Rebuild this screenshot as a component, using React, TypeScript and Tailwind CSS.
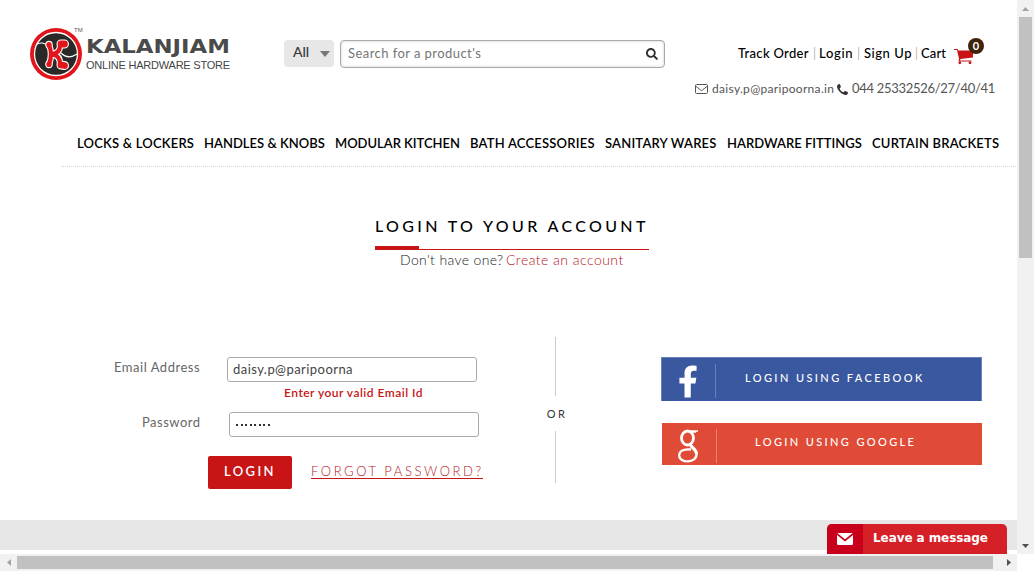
import type { ReactNode } from "react";
import { FaSearch, FaFacebookF } from "react-icons/fa";

function Emblem() {
  return (
    <svg viewBox="0 0 54 54" className="h-[54px] w-[54px] shrink-0">
      <circle cx="27" cy="27" r="26" fill="#e3151c" />
      <circle cx="27" cy="27" r="21.5" fill="#2a2928" stroke="#fff" strokeWidth="1.3" />
      <path d="M8 17 Q15 14 20 20 M32 26 Q39 33 48 27" fill="none" stroke="#fff" strokeWidth="1.2" />
      <g strokeLinecap="round" strokeLinejoin="round" fill="none" stroke="#fff">
        <path d="M20 18 Q24 27 20 37 M23 27 Q31 26 31 19 M25 28 Q31 29 31 37" strokeWidth="6.4" />
        <path d="M20 17.5 V18 M20 37 V37.5" strokeWidth="7.4" />
        <path d="M32 17 L35.5 17 M32 38 L35.5 38.5" strokeWidth="9" />
      </g>
      <g strokeLinecap="round" strokeLinejoin="round" fill="none" stroke="#e3151c">
        <path d="M20 18 Q24 27 20 37 M23 27 Q31 26 31 19 M25 28 Q31 29 31 37" strokeWidth="4.2" />
        <path d="M20 17.5 V18 M20 37 V37.5" strokeWidth="5.2" />
        <path d="M32 17 L35.5 17 M32 38 L35.5 38.5" strokeWidth="6.8" />
      </g>
    </svg>
  );
}

function Cart() {
  return (
    <svg viewBox="0 0 20 17" className="mt-[10px] h-[17px] w-5" fill="#c81414">
      <path d="M0 1 H3.6 L4.3 2.5 H19 V9.5 L6.5 11 L6 12.6 H17.5 V13.6 H4.6 L5 10.5 L3 2 H0 Z" />
      <circle cx="5.8" cy="14.8" r="1.4" />
      <circle cx="16" cy="14.8" r="1.4" />
    </svg>
  );
}

function Mail() {
  return (
    <svg viewBox="0 0 14 12" className="mr-[3px] h-3 w-[14px] shrink-0" fill="none" stroke="#555">
      <rect x="0.5" y="1.5" width="12" height="9" rx="1" />
      <path d="M0.8 3.2 L5.5 7 Q6.5 7.7 7.5 7 L12.2 3.2" />
    </svg>
  );
}

function Phone() {
  return (
    <svg viewBox="0 0 11 11" className="mr-[4px] h-[11px] w-[11px] shrink-0" fill="#333">
      <path d="M0 2.3 C0 1 1.3 0 2.6 0 C3 0 3.5 2 3.9 2.8 C4 3.6 2.6 4.1 2.7 4.7 C3.4 6.3 4.7 7.6 6.3 8.3 C6.9 8.4 7.4 7 8.2 7.1 C9 7.5 11 8 11 8.4 C11 9.7 10 11 8.7 11 C5 11 0 6 0 2.3 Z" />
    </svg>
  );
}

function GoogleG() {
  return (
    <svg viewBox="0 0 22 34" className="h-[34px] w-[22px]" fill="none" stroke="#fff">
      <ellipse cx="10.5" cy="9" rx="6" ry="7" strokeWidth="2.8" />
      <path d="M12 2 H21 M14.5 3 H19" strokeWidth="1.5" />
      <path d="M13 15 C13 18 19.5 19.5 19.5 25" strokeWidth="3.2" />
      <path d="M19.5 25 C20 34.5 2.2 34.5 2.2 26.5 C2.2 21 8 20 14 20.5" strokeWidth="2.3" />
    </svg>
  );
}

function NavItem({ className, children }: { className: string; children: ReactNode }) {
  return <a className={`shrink-0 ${className}`}>{children}</a>;
}

function Header() {
  return (
    <header className="flex h-[120px] w-[1017px]">
      <div className="flex w-[284px] pt-[27px] pl-[29px]">
        <Emblem />
        <div className="relative w-[160px] pl-[3px]">
          <span className="absolute top-[-1px] left-[-9px] font-['Liberation_Sans'] text-[6px] leading-[8px] text-[#555]">TM</span>
          <div className="mt-[8px] h-[23px] w-[121px] origin-left scale-x-[1.2] font-['DejaVu_Sans'] text-[19px] leading-[23px] font-bold text-[#4a4a4a]">KALANJIAM</div>
          <div className="font-['Liberation_Sans'] text-[11px] leading-[15px] tracking-[-0.22px] whitespace-nowrap text-[#444]">ONLINE HARDWARE STORE</div>
        </div>
      </div>
      <div className="flex w-[381px] gap-[6px] pt-[40px]">
        <button className="flex h-[27px] w-[50px] items-center justify-between rounded-[4px] bg-[#e7e7e7] pr-1 pb-[4px] pl-[9px] text-[14px] font-medium text-[#333]">
          All
          <svg viewBox="0 0 10 6" className="mt-[4px] h-[6px] w-[10px]"><path d="M0 0H10L5 6Z" fill="#777" /></svg>
        </button>
        <div className="flex h-[28px] w-[325px] items-center justify-between rounded-[4px] border border-[#aaa] pr-[6px] pb-px pl-[7px] text-[13px] tracking-[0.44px] text-[#757575] shadow-[inset_0_0_3px_#ccc]">
          Search for a product's
          <FaSearch className="h-[12px] w-[12px] text-[#333]" />
        </div>
      </div>
      <div className="w-[352px]">
        <div className="flex h-[74px] pt-[38px] pl-[73px] text-[13px] leading-[31px] font-medium whitespace-nowrap text-black">
          <span className="w-[75px] tracking-[0.3px]">Track Order</span>
          <span className="w-[6px] font-light text-[#777]">|</span>
          <span className="w-[38px] tracking-[0.7px]">Login</span>
          <span className="w-[7px] font-light text-[#777]">|</span>
          <span className="w-[51px] tracking-[0.55px]">Sign Up</span>
          <span className="w-[6px] font-light text-[#b66]">|</span>
          <span className="w-[33px] tracking-[0.12px]">Cart</span>
          <span className="relative">
            <Cart />
            <b className="absolute top-0 left-[14px] h-4 w-4 rounded-full bg-[#40230c] text-center text-[11px] leading-4 text-white">0</b>
          </span>
        </div>
        <div className="flex h-[30px] items-center pl-[30px] text-[12px] whitespace-nowrap text-[#555]">
          <Mail />
          <span className="w-[125px] tracking-[0.31px]">daisy.p@paripoorna.in</span>
          <Phone />
          <span className="text-[13px] tracking-[-0.29px]">044 25332526/27/40/41</span>
        </div>
      </div>
    </header>
  );
}

function Nav() {
  return (
    <nav className="ml-[61px] flex h-[47px] w-[955px] border-b border-dotted border-[#d4d4d4] pl-4 text-[13px] leading-[46px] font-semibold whitespace-nowrap text-black">
      <NavItem className="w-[127px] tracking-[0.2px]">LOCKS &amp; LOCKERS</NavItem>
      <NavItem className="w-[131px] tracking-[0.02px]">HANDLES &amp; KNOBS</NavItem>
      <NavItem className="w-[135px] tracking-[-0.02px]">MODULAR KITCHEN</NavItem>
      <NavItem className="w-[135px] tracking-[0.21px]">BATH ACCESSORIES</NavItem>
      <NavItem className="w-[122px] tracking-[0.2px]">SANITARY WARES</NavItem>
      <NavItem className="w-[145px] tracking-[0.02px]">HARDWARE FITTINGS</NavItem>
      <NavItem className="tracking-[0.2px]">CURTAIN BRACKETS</NavItem>
    </nav>
  );
}

function Title() {
  return (
    <section className="ml-[375px] h-[170px] w-[274px] pt-[48px] whitespace-nowrap">
      <h1 className="h-[31px] text-[16px] leading-[21px] font-medium tracking-[3.35px] text-black">LOGIN TO YOUR ACCOUNT</h1>
      <div className="flex h-[4px] items-end">
        <i className="h-[4px] w-[44px] bg-[#c81414]" />
        <i className="h-px w-[230px] bg-[#c81414]" />
      </div>
      <p className="flex pl-[25px] text-[14px] leading-[20px] font-light text-[#222]">
        <span className="w-[106px] tracking-[0.35px]">Don't have one?</span>
        <a className="tracking-[0.47px] text-[#b8141c]">Create an account</a>
      </p>
    </section>
  );
}

function LoginForm() {
  return (
    <form className="w-[545px] shrink-0 pt-[20px] text-[13px] whitespace-nowrap text-[#666]">
      <div className="flex h-[25px]">
        <label className="w-[227px] pl-[114px] leading-[21px] tracking-[0.52px]">Email Address</label>
        <div className="w-[250px] rounded-[3px] border border-[#aaa] pl-[5px] leading-[23px] tracking-[0.45px] text-[#444]">daisy.p@paripoorna</div>
      </div>
      <p className="h-[30px] pl-[284px] text-[12px] leading-[21px] font-semibold tracking-[0.48px] text-[#c81414]">Enter your valid Email Id</p>
      <div className="flex h-[25px]">
        <label className="w-[229px] pl-[142px] leading-[21px] tracking-[0.49px]">Password</label>
        <div className="flex w-[250px] items-center gap-[2.5px] rounded-[3px] border border-[#aaa] pl-[6px]">
          {Array.from({ length: 8 }, (_, i) => <i key={i} className="h-[2px] w-[2px] bg-[#333]" />)}
        </div>
      </div>
      <div className="mt-[19px] flex pl-[208px]">
        <button className="h-[33px] w-[84px] rounded-[2px] bg-[#c81414] pb-px text-[13px] font-semibold tracking-[2.4px] text-white">LOGIN</button>
        <a className="ml-[19px] h-[23px] w-[172px] border-b border-[#c81414] leading-[31px] font-light tracking-[2.57px] text-[#b8141c]">FORGOT PASSWORD?</a>
      </div>
    </form>
  );
}

function Divider() {
  return (
    <div className="flex w-[21px] shrink-0 flex-col items-center text-[11px] text-[#333]">
      <i className="h-[59px] w-px bg-[#ccc]" />
      <span className="h-[35px] pl-[3px] leading-[35px] tracking-[2.5px]">OR</span>
      <i className="h-[52px] w-px bg-[#ccc]" />
    </div>
  );
}

function Social() {
  return (
    <div className="ml-[95px] pt-[20px] text-[11px] font-medium whitespace-nowrap text-white">
      <a className="flex h-[44px] w-[321px] border border-b-0 border-[#6b80b8] bg-[#3a589f]">
        <span className="mt-[6px] flex h-[34px] w-[54px] items-end border-r border-[#6b80b8] pl-[16px]"><FaFacebookF className="h-[33px] w-[20px]" /></span>
        <span className="pl-[29px] leading-[40px] tracking-[2.4px]">LOGIN USING FACEBOOK</span>
      </a>
      <a className="mt-[22px] ml-px flex h-[42px] w-[320px] bg-[#e04b37]">
        <span className="mt-[6px] flex h-[34px] w-[55px] items-end border-r border-[#e98473] pl-[15px]"><GoogleG /></span>
        <span className="pl-[38px] leading-[38px] tracking-[2.37px]">LOGIN USING GOOGLE</span>
      </a>
    </div>
  );
}

export default function App() {
  return (
    <div className="grid h-[571px] w-[1034px] grid-cols-[1017px_17px] grid-rows-[554px_17px] overflow-hidden bg-white font-['Lato',sans-serif]">
      <main className="overflow-hidden">
        <Header />
        <Nav />
        <Title />
        <div className="flex h-[183px]">
          <LoginForm />
          <Divider />
          <Social />
        </div>
        <footer className="relative h-[30px] bg-[#e7e7e7]">
          <div className="absolute top-[4px] left-[827px] flex h-[30px] w-[180px] overflow-hidden rounded-t-[5px] bg-[#d62027] font-['DejaVu_Sans'] text-[12px] leading-[29px] font-bold tracking-[-0.08px] whitespace-nowrap text-white">
            <span className="flex w-[36px] items-center justify-center bg-[#c8001c]">
              <svg viewBox="0 0 16 12" className="h-3 w-4"><rect width="16" height="12" rx="1.5" fill="#fff" /><path d="M0 1 8 7.5 16 1" fill="none" stroke="#c8001c" strokeWidth="1.7" /></svg>
            </span>
            <span className="pl-[10px]">Leave a message</span>
          </div>
        </footer>
      </main>
      <div className="flex flex-col items-center bg-[#f1f1f1]">
        <div className="flex h-[17px] items-center"><svg viewBox="0 0 7 4" className="h-1 w-[7px]"><path d="M0 4H7L3.5 0Z" fill="#a3a3a3" /></svg></div>
        <i className="h-[241px] w-[13px] bg-[#c1c1c1]" />
        <div className="mt-auto flex h-[17px] items-center"><svg viewBox="0 0 7 4" className="h-1 w-[7px]"><path d="M0 0H7L3.5 4Z" fill="#505050" /></svg></div>
      </div>
      <div className="flex items-center bg-[#f1f1f1]">
        <div className="flex w-[17px] justify-center"><svg viewBox="0 0 4 7" className="h-[7px] w-1"><path d="M4 0V7L0 3.5Z" fill="#a3a3a3" /></svg></div>
        <i className="h-[13px] w-[976px] bg-[#c1c1c1]" />
        <div className="ml-auto flex w-[17px] justify-center"><svg viewBox="0 0 4 7" className="h-[7px] w-1"><path d="M0 0V7L4 3.5Z" fill="#505050" /></svg></div>
      </div>
    </div>
  );
}
